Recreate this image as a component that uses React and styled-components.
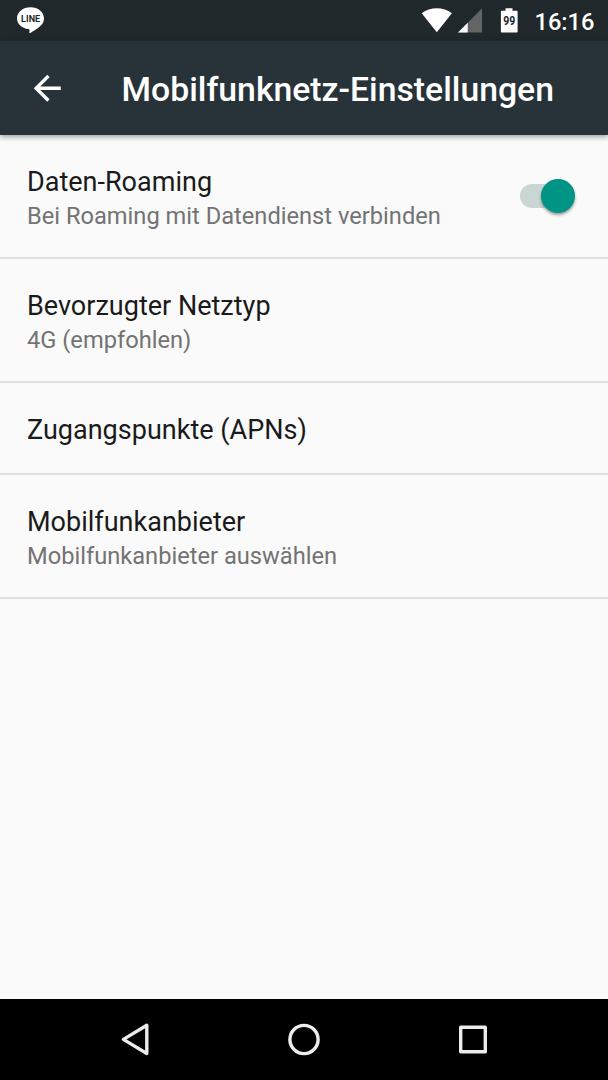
import React from 'react';
import styled, { createGlobalStyle } from 'styled-components';

const GlobalStyle = createGlobalStyle`
  *, *::before, *::after { box-sizing: border-box; }
  body { margin: 0; background: #fafafa; }
`;

const Screen = styled.div`
  display: flex;
  flex-direction: column;
  width: 608px;
  height: 1080px;
  overflow: hidden;
  background: #fafafa;
  font-family: Roboto, 'Liberation Sans', sans-serif;
`;

const StatusBar = styled.header`
  flex: none;
  display: flex;
  justify-content: space-between;
  height: 40.5px;
  background: #20282b;
`;

const StatusGroup = styled.div`
  display: flex;
  align-items: flex-start;
`;

const Icon = styled.svg`
  display: block;
  flex: none;
`;

const Clock = styled.time`
  width: 73.5px;
  padding-top: 7.5px;
  color: #fff;
  font-size: 23.64px;
  font-weight: 500;
  line-height: 28px;
  white-space: nowrap;
`;

const Toolbar = styled.div`
  flex: none;
  display: flex;
  align-items: center;
  height: 94.5px;
  padding-left: 27px;
  background: #283339;
  box-shadow: 0 2px 5px rgba(0, 0, 0, 0.36);
`;

const BackButton = styled.button`
  display: block;
  margin: 0;
  padding: 0;
  border: 0;
  background: none;
  color: #fff;
`;

const Heading = styled.h1`
  margin: 4px 0 0 54.1px;
  color: #fff;
  font-size: 33.75px;
  font-weight: 500;
  line-height: 40px;
  white-space: nowrap;
`;

const List = styled.ul`
  flex: 1;
  margin: 0;
  padding: 0;
  list-style: none;
`;

const Row = styled.li`
  display: flex;
  align-items: center;
  justify-content: space-between;
  height: ${(p) => (p.$single ? 92 : 124)}px;
  padding: 0 30px 0 27px;
  border-bottom: 2px solid #dfdfdf;
`;

const RowText = styled.div`
  padding-top: 4px;
  white-space: nowrap;
`;

const RowTitle = styled.div`
  color: #1a1a1a;
  font-size: 27.02px;
  line-height: 34px;
`;

const RowSummary = styled.div`
  padding-top: 1px;
  color: #737373;
  font-size: 23.66px;
  line-height: 32px;
`;

const Switch = styled.button`
  display: flex;
  align-items: center;
  width: 58px;
  height: 40px;
  margin: 0;
  padding: 0;
  border: 0;
  background: none;
`;

const Track = styled.span`
  display: flex;
  align-items: center;
  justify-content: flex-end;
  width: 51px;
  height: 24px;
  border-radius: 12px;
  background: #c9d6d4;
`;

const Thumb = styled.span`
  flex: none;
  width: 34px;
  height: 34px;
  margin-right: -4px;
  border-radius: 50%;
  background: #009485;
  box-shadow: 0 2px 3px rgba(0, 0, 0, 0.38);
`;

const NavBar = styled.nav`
  flex: none;
  display: flex;
  justify-content: center;
  height: 81px;
  background: #000;
`;

const NavButton = styled.button`
  width: 169px;
  height: 81px;
  margin: 0;
  padding: 0;
  border: 0;
  background: none;
`;

const settings = [
  { title: 'Daten-Roaming', summary: 'Bei Roaming mit Datendienst verbinden', on: true },
  { title: 'Bevorzugter Netztyp', summary: '4G (empfohlen)' },
  { title: 'Zugangspunkte (APNs)' },
  { title: 'Mobilfunkanbieter', summary: 'Mobilfunkanbieter auswählen' },
];

function LineIcon() {
  return (
    <Icon width="60" height="40" viewBox="0 0 60 40">
      <path
        fill="#fff"
        d="M30.5 7.2C23 7.2 17 12 17 18.2c0 5.5 4.8 10 11.3 10.9 1.2.2 1.3.8 1.2 1.8l-.2 1.500c0 .7.3.9 1 .5 3-1.600 8.700-5.200 11.500-8.400 1.500-1.800 2.200-4 2.200-6.300 0-6.200-6-11-13.500-11z"
      />
      <text
        x="30.6"
        y="22.2"
        fill="#20282b"
        fontFamily="Roboto, sans-serif"
        fontSize="9.2"
        fontWeight="700"
        textAnchor="middle"
        textLength="19"
        lengthAdjust="spacingAndGlyphs"
      >
        LINE
      </text>
    </Icon>
  );
}

function WifiIcon() {
  return (
    <Icon width="38" height="40" viewBox="418 0 38 40">
      <path fill="#fff" d="M436.8 32.3 421.7 13.3C426 9.900 431.300 8.200 436.800 8.200s10.800 1.700 15.100 5.100z" />
    </Icon>
  );
}

function SignalIcon() {
  return (
    <Icon width="38" height="40" viewBox="456 0 38 40">
      <path fill="#636565" d="M458 32.5 482 8.500v24z" />
      <path fill="#fff" d="M458 32.5 467.700 22.800v9.700z" />
    </Icon>
  );
}

function BatteryIcon() {
  return (
    <Icon width="40.5" height="40" viewBox="494 0 40.5 40">
      <path
        fill="#fff"
        d="M505.5 8.3h7v2.400h4.400c.4 0 .7.3.7.7v20.400c0 .4-.3.700-.7.700h-15.300c-.4 0-.7-.3-.7-.7V11.400c0-.4.300-.7.700-.7h3.900z"
      />
      <text
        x="509.2"
        y="25"
        fill="#20282b"
        fontFamily="Roboto, sans-serif"
        fontSize="12.5"
        fontWeight="700"
        textAnchor="middle"
        textLength="12"
        lengthAdjust="spacingAndGlyphs"
      >
        99
      </text>
    </Icon>
  );
}

function BackArrow() {
  return (
    <Icon width="40.5" height="40.5" viewBox="0 0 24 24">
      <path fill="currentColor" d="M20 11H7.830l5.590-5.590L12 4l-8 8 8 8 1.410-1.410L7.830 13H20v-2z" />
    </Icon>
  );
}

function NavIcon({ children }) {
  return (
    <Icon
      width="169"
      height="81"
      viewBox="-84 -40.5 169 81"
      fill="none"
      stroke="#ececec"
      strokeWidth="3.4"
      strokeLinejoin="round"
    >
      {children}
    </Icon>
  );
}

export default function App() {
  return (
    <Screen>
      <GlobalStyle />
      <StatusBar>
        <StatusGroup>
          <LineIcon />
        </StatusGroup>
        <StatusGroup>
          <WifiIcon />
          <SignalIcon />
          <BatteryIcon />
          <Clock>16:16</Clock>
        </StatusGroup>
      </StatusBar>
      <Toolbar>
        <BackButton aria-label="Zurück">
          <BackArrow />
        </BackButton>
        <Heading>Mobilfunknetz-Einstellungen</Heading>
      </Toolbar>
      <List>
        {settings.map((s) => (
          <Row key={s.title} $single={!s.summary}>
            <RowText>
              <RowTitle>{s.title}</RowTitle>
              {s.summary && <RowSummary>{s.summary}</RowSummary>}
            </RowText>
            {s.on && (
              <Switch role="switch" aria-checked="true" aria-label={s.title}>
                <Track>
                  <Thumb />
                </Track>
              </Switch>
            )}
          </Row>
        ))}
      </List>
      <NavBar>
        <NavButton aria-label="Zurück">
          <NavIcon>
            <path d="M11.800-14.200V14L-11.600-.1z" />
          </NavIcon>
        </NavButton>
        <NavButton aria-label="Startbildschirm">
          <NavIcon>
            <circle cx="0" cy="0" r="14.1" />
          </NavIcon>
        </NavButton>
        <NavButton aria-label="Übersicht">
          <NavIcon>
            <rect x="-12.3" y="-12.3" width="24.6" height="24.6" />
          </NavIcon>
        </NavButton>
      </NavBar>
    </Screen>
  );
}
